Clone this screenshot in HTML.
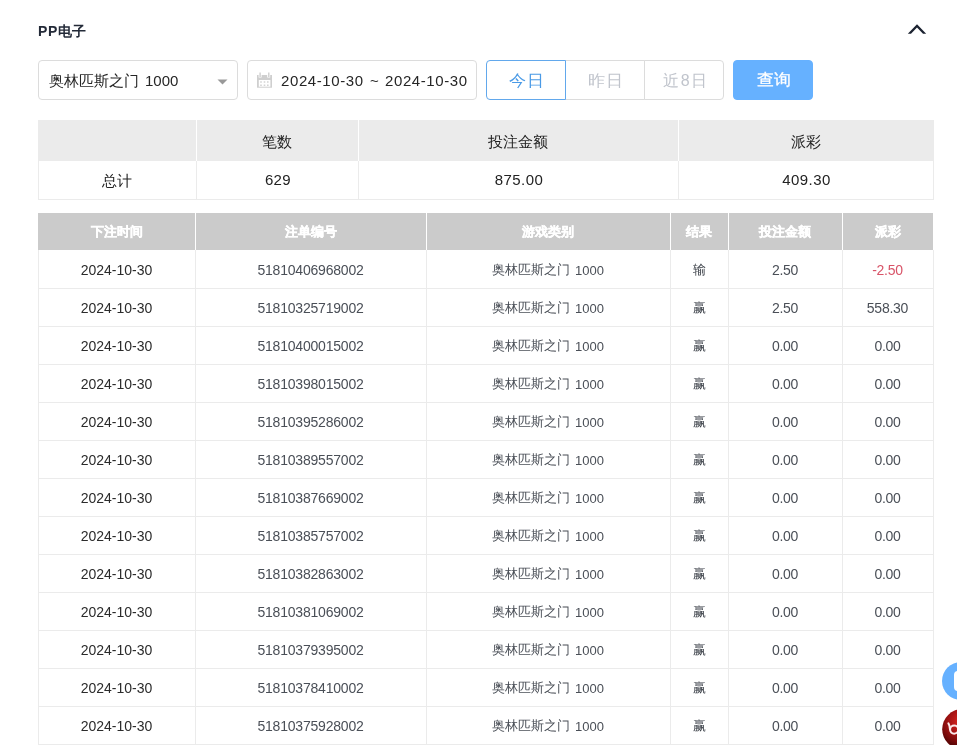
<!DOCTYPE html><html><head><meta charset="utf-8"><style>
*{margin:0;padding:0;box-sizing:border-box}
html,body{width:957px;height:745px;overflow:hidden;background:#fff}
body{position:relative;font-family:"Liberation Sans",sans-serif;font-size:14px;color:#333}
.a{position:absolute}
.t{position:absolute;will-change:transform;text-align:center;white-space:nowrap;line-height:20px;height:20px}
.tl{position:absolute;will-change:transform;white-space:nowrap;line-height:20px;height:20px}
.box{position:absolute;top:60px;height:40px;border:1px solid #dcdcdc;border-radius:4px;background:#fff}
.btn{position:absolute;top:60px;height:40px;border:1px solid #dcdcdc;background:#fff}
</style></head><body><svg class="a g" style="left:0;top:0" width="957" height="50" viewBox="0 0 957 50"><path d="M907.8 33.8 L917 24.2 L926.2 33.8 L923 33.8 L917 27.6 L911 33.8 Z" fill="#1c2331"/></svg>
<div class="box g" style="left:38px;width:200px"></div>
<svg class="a g" style="left:217px;top:79px" width="11" height="6" viewBox="0 0 11 6"><path d="M0.5 0.5 L10.5 0.5 L5.5 5.5Z" fill="#999"/></svg>
<div class="box g" style="left:247px;width:230px"></div>
<svg class="a g" style="left:252px;top:68px" width="24" height="24" viewBox="0 0 24 24"><path fill="#cfcfcf" d="M5 7h15v12.7H5z"/><path fill="#fff" d="M6.8 12h11.6v6.7H6.8z"/><path fill="#fff" d="M6.6 6.2h3v3.4h-3zM15.2 6.2h3v3.4h-3z"/><path fill="#cfcfcf" d="M7.4 4.5h1.4v4.6H7.4zM16.1 4.5h1.4v4.6h-1.4z"/><path fill="#d4d4d4" d="M8.2 13.3h1.6v1.4H8.2zM11.7 13.3h1.6v1.4h-1.6zM15 13.3h1.6v1.4H15zM8.2 16.5h1.6v1.4H8.2zM11.7 16.5h1.6v1.4h-1.6zM15 16.5h1.6v1.4H15z"/></svg>
<div class="btn g" style="left:565px;width:80px"></div>
<div class="btn g" style="left:644px;width:80px;border-radius:0 4px 4px 0"></div>
<div class="btn g" style="left:486px;width:80px;border-color:#62a8ec;border-radius:4px 0 0 4px"></div>
<div class="btn g" style="left:733px;width:80px;border-color:#66b1ff;background:#66b1ff;border-radius:4px"></div>
<div class="a g" style="left:38px;top:120px;width:896px;height:41px;background:#ebebeb"></div>
<div class="a g" style="left:38px;top:161px;width:896px;height:39px;border:1px solid #ebebeb;border-top:none"></div>
<div class="a g" style="left:196px;top:120px;width:1px;height:41px;background:#fff"></div>
<div class="a g" style="left:196px;top:161px;width:1px;height:39px;background:#ebebeb"></div>
<div class="a g" style="left:358px;top:120px;width:1px;height:41px;background:#fff"></div>
<div class="a g" style="left:358px;top:161px;width:1px;height:39px;background:#ebebeb"></div>
<div class="a g" style="left:678px;top:120px;width:1px;height:41px;background:#fff"></div>
<div class="a g" style="left:678px;top:161px;width:1px;height:39px;background:#ebebeb"></div>
<div class="a g" style="left:38px;top:213px;width:895px;height:37px;background:#cbcbcb"></div>
<div class="a g" style="left:195px;top:213px;width:1px;height:37px;background:#fff"></div>
<div class="a g" style="left:426px;top:213px;width:1px;height:37px;background:#fff"></div>
<div class="a g" style="left:670px;top:213px;width:1px;height:37px;background:#fff"></div>
<div class="a g" style="left:728px;top:213px;width:1px;height:37px;background:#fff"></div>
<div class="a g" style="left:842px;top:213px;width:1px;height:37px;background:#fff"></div>
<div class="a g" style="left:38px;top:288px;width:896px;height:1px;background:#ebebeb"></div>
<div class="a g" style="left:38px;top:326px;width:896px;height:1px;background:#ebebeb"></div>
<div class="a g" style="left:38px;top:364px;width:896px;height:1px;background:#ebebeb"></div>
<div class="a g" style="left:38px;top:402px;width:896px;height:1px;background:#ebebeb"></div>
<div class="a g" style="left:38px;top:440px;width:896px;height:1px;background:#ebebeb"></div>
<div class="a g" style="left:38px;top:478px;width:896px;height:1px;background:#ebebeb"></div>
<div class="a g" style="left:38px;top:516px;width:896px;height:1px;background:#ebebeb"></div>
<div class="a g" style="left:38px;top:554px;width:896px;height:1px;background:#ebebeb"></div>
<div class="a g" style="left:38px;top:592px;width:896px;height:1px;background:#ebebeb"></div>
<div class="a g" style="left:38px;top:630px;width:896px;height:1px;background:#ebebeb"></div>
<div class="a g" style="left:38px;top:668px;width:896px;height:1px;background:#ebebeb"></div>
<div class="a g" style="left:38px;top:706px;width:896px;height:1px;background:#ebebeb"></div>
<div class="a g" style="left:38px;top:744px;width:896px;height:1px;background:#ebebeb"></div>
<div class="a g" style="left:38px;top:250px;width:1px;height:495px;background:#ebebeb"></div>
<div class="a g" style="left:195px;top:250px;width:1px;height:495px;background:#ebebeb"></div>
<div class="a g" style="left:426px;top:250px;width:1px;height:495px;background:#ebebeb"></div>
<div class="a g" style="left:670px;top:250px;width:1px;height:495px;background:#ebebeb"></div>
<div class="a g" style="left:728px;top:250px;width:1px;height:495px;background:#ebebeb"></div>
<div class="a g" style="left:842px;top:250px;width:1px;height:495px;background:#ebebeb"></div>
<div class="a g" style="left:933px;top:250px;width:1px;height:495px;background:#ebebeb"></div>
<div class="a g" style="left:942px;top:662px;width:38px;height:38px;border-radius:50%;background:#66b1ff"></div>
<div class="a g" style="left:954px;top:671px;width:10px;height:20px;border-radius:4px;background:#fff"></div>
<svg class="a g" style="left:930px;top:700px" width="27" height="45" viewBox="930 700 27 45"><defs><radialGradient id="rb" cx="962" cy="722" r="24" gradientUnits="userSpaceOnUse"><stop offset="0" stop-color="#e42a22"/><stop offset="0.45" stop-color="#b01616"/><stop offset="0.85" stop-color="#7a0a0a"/><stop offset="1" stop-color="#5e0606"/></radialGradient></defs><circle cx="962.4" cy="729.2" r="20.2" fill="url(#rb)"/><path d="M948.4 723.3 Q950 725.5 950 729.5" fill="none" stroke="#fbe9e9" stroke-width="2" stroke-linecap="round"/><circle cx="954.2" cy="729.6" r="4.1" fill="none" stroke="#fbe9e9" stroke-width="2"/></svg>
<div class="tl" style="left:38px;top:21px;font-size:14px;letter-spacing:0.6px;font-weight:bold;color:#232a38;">PP电子</div>
<div class="tl" style="left:49px;top:71px;font-size:15px;letter-spacing:0px;font-weight:normal;color:#262626;">奥林匹斯之门</div>
<div class="tl" style="left:144.5px;top:71px;font-size:15px;letter-spacing:0px;font-weight:normal;color:#262626;">1000</div>
<div class="tl" style="left:281px;top:71px;font-size:15px;letter-spacing:0.6px;font-weight:normal;color:#262626;">2024-10-30</div>
<div class="tl" style="left:370px;top:71px;font-size:15px;letter-spacing:0px;font-weight:normal;color:#262626;">~</div>
<div class="tl" style="left:385px;top:71px;font-size:15px;letter-spacing:0.6px;font-weight:normal;color:#262626;">2024-10-30</div>
<div class="t" style="left:487.0px;top:71px;width:80px;font-size:16px;letter-spacing:0.9px;font-weight:normal;color:#4a9ae6;transform:scaleX(1.07);">今日</div>
<div class="t" style="left:566.0px;top:71px;width:80px;font-size:16px;letter-spacing:0.9px;font-weight:normal;color:#c0c4cc;transform:scaleX(1.07);">昨日</div>
<div class="t" style="left:645.5px;top:71px;width:80px;font-size:16px;letter-spacing:1.4px;font-weight:normal;color:#c0c4cc;">近8日</div>
<div class="t" style="left:733.6px;top:70px;width:80px;font-size:16px;letter-spacing:0.4px;font-weight:normal;color:#fff;-webkit-text-stroke:0.3px #fff;transform:scaleX(1.06);">查询</div>
<div class="t" style="left:38px;top:171px;width:158px;font-size:15px;letter-spacing:0px;font-weight:normal;color:#222;">总计</div>
<div class="t" style="left:196px;top:132px;width:162px;font-size:15px;letter-spacing:0px;font-weight:normal;color:#222;">笔数</div>
<div class="t" style="left:196.5px;top:170px;width:162px;font-size:15px;letter-spacing:0.4px;font-weight:normal;color:#222;">629</div>
<div class="t" style="left:358px;top:132px;width:320px;font-size:15px;letter-spacing:0px;font-weight:normal;color:#222;">投注金额</div>
<div class="t" style="left:358.5px;top:170px;width:320px;font-size:15px;letter-spacing:0.4px;font-weight:normal;color:#222;">875.00</div>
<div class="t" style="left:678px;top:132px;width:255px;font-size:15px;letter-spacing:0px;font-weight:normal;color:#222;">派彩</div>
<div class="t" style="left:678.5px;top:170px;width:255px;font-size:15px;letter-spacing:0.4px;font-weight:normal;color:#222;">409.30</div>
<div class="t" style="left:38px;top:222px;width:157px;font-size:13px;letter-spacing:0px;font-weight:bold;color:#fff;-webkit-text-stroke:0.35px #fff;">下注时间</div>
<div class="t" style="left:195px;top:222px;width:231px;font-size:13px;letter-spacing:0px;font-weight:bold;color:#fff;-webkit-text-stroke:0.35px #fff;">注单编号</div>
<div class="t" style="left:426px;top:222px;width:244px;font-size:13px;letter-spacing:0px;font-weight:bold;color:#fff;-webkit-text-stroke:0.35px #fff;">游戏类别</div>
<div class="t" style="left:670px;top:222px;width:58px;font-size:13px;letter-spacing:0px;font-weight:bold;color:#fff;-webkit-text-stroke:0.35px #fff;">结果</div>
<div class="t" style="left:728px;top:222px;width:114px;font-size:13px;letter-spacing:0px;font-weight:bold;color:#fff;-webkit-text-stroke:0.35px #fff;">投注金额</div>
<div class="t" style="left:842px;top:222px;width:91px;font-size:13px;letter-spacing:0px;font-weight:bold;color:#fff;-webkit-text-stroke:0.35px #fff;">派彩</div>
<div class="t" style="left:38px;top:260px;width:157px;font-size:14px;letter-spacing:0px;font-weight:normal;color:#2b2b2b;">2024-10-30</div>
<div class="t" style="left:195px;top:260px;width:231px;font-size:14px;letter-spacing:-0.2px;font-weight:normal;color:#4a4f57;">51810406968002</div>
<div class="tl" style="left:492.2px;top:260px;font-size:13px;letter-spacing:0px;font-weight:normal;color:#4a4f57;">奥林匹斯之门</div>
<div class="tl" style="left:575.3px;top:261px;font-size:13px;letter-spacing:0px;font-weight:normal;color:#4a4f57;">1000</div>
<div class="t" style="left:670px;top:260px;width:58px;font-size:13px;letter-spacing:0px;font-weight:normal;color:#3a3f47;">输</div>
<div class="t" style="left:728px;top:260px;width:114px;font-size:14px;letter-spacing:-0.3px;font-weight:normal;color:#4a4f57;">2.50</div>
<div class="t" style="left:842px;top:260px;width:91px;font-size:14px;letter-spacing:-0.25px;font-weight:normal;color:#d85468;">-2.50</div>
<div class="t" style="left:38px;top:298px;width:157px;font-size:14px;letter-spacing:0px;font-weight:normal;color:#2b2b2b;">2024-10-30</div>
<div class="t" style="left:195px;top:298px;width:231px;font-size:14px;letter-spacing:-0.2px;font-weight:normal;color:#4a4f57;">51810325719002</div>
<div class="tl" style="left:492.2px;top:298px;font-size:13px;letter-spacing:0px;font-weight:normal;color:#4a4f57;">奥林匹斯之门</div>
<div class="tl" style="left:575.3px;top:299px;font-size:13px;letter-spacing:0px;font-weight:normal;color:#4a4f57;">1000</div>
<div class="t" style="left:670px;top:298px;width:58px;font-size:13px;letter-spacing:0px;font-weight:normal;color:#3a3f47;">赢</div>
<div class="t" style="left:728px;top:298px;width:114px;font-size:14px;letter-spacing:-0.3px;font-weight:normal;color:#4a4f57;">2.50</div>
<div class="t" style="left:842px;top:298px;width:91px;font-size:14px;letter-spacing:-0.25px;font-weight:normal;color:#4a4f57;">558.30</div>
<div class="t" style="left:38px;top:336px;width:157px;font-size:14px;letter-spacing:0px;font-weight:normal;color:#2b2b2b;">2024-10-30</div>
<div class="t" style="left:195px;top:336px;width:231px;font-size:14px;letter-spacing:-0.2px;font-weight:normal;color:#4a4f57;">51810400015002</div>
<div class="tl" style="left:492.2px;top:336px;font-size:13px;letter-spacing:0px;font-weight:normal;color:#4a4f57;">奥林匹斯之门</div>
<div class="tl" style="left:575.3px;top:337px;font-size:13px;letter-spacing:0px;font-weight:normal;color:#4a4f57;">1000</div>
<div class="t" style="left:670px;top:336px;width:58px;font-size:13px;letter-spacing:0px;font-weight:normal;color:#3a3f47;">赢</div>
<div class="t" style="left:728px;top:336px;width:114px;font-size:14px;letter-spacing:-0.3px;font-weight:normal;color:#4a4f57;">0.00</div>
<div class="t" style="left:842px;top:336px;width:91px;font-size:14px;letter-spacing:-0.25px;font-weight:normal;color:#4a4f57;">0.00</div>
<div class="t" style="left:38px;top:374px;width:157px;font-size:14px;letter-spacing:0px;font-weight:normal;color:#2b2b2b;">2024-10-30</div>
<div class="t" style="left:195px;top:374px;width:231px;font-size:14px;letter-spacing:-0.2px;font-weight:normal;color:#4a4f57;">51810398015002</div>
<div class="tl" style="left:492.2px;top:374px;font-size:13px;letter-spacing:0px;font-weight:normal;color:#4a4f57;">奥林匹斯之门</div>
<div class="tl" style="left:575.3px;top:375px;font-size:13px;letter-spacing:0px;font-weight:normal;color:#4a4f57;">1000</div>
<div class="t" style="left:670px;top:374px;width:58px;font-size:13px;letter-spacing:0px;font-weight:normal;color:#3a3f47;">赢</div>
<div class="t" style="left:728px;top:374px;width:114px;font-size:14px;letter-spacing:-0.3px;font-weight:normal;color:#4a4f57;">0.00</div>
<div class="t" style="left:842px;top:374px;width:91px;font-size:14px;letter-spacing:-0.25px;font-weight:normal;color:#4a4f57;">0.00</div>
<div class="t" style="left:38px;top:412px;width:157px;font-size:14px;letter-spacing:0px;font-weight:normal;color:#2b2b2b;">2024-10-30</div>
<div class="t" style="left:195px;top:412px;width:231px;font-size:14px;letter-spacing:-0.2px;font-weight:normal;color:#4a4f57;">51810395286002</div>
<div class="tl" style="left:492.2px;top:412px;font-size:13px;letter-spacing:0px;font-weight:normal;color:#4a4f57;">奥林匹斯之门</div>
<div class="tl" style="left:575.3px;top:413px;font-size:13px;letter-spacing:0px;font-weight:normal;color:#4a4f57;">1000</div>
<div class="t" style="left:670px;top:412px;width:58px;font-size:13px;letter-spacing:0px;font-weight:normal;color:#3a3f47;">赢</div>
<div class="t" style="left:728px;top:412px;width:114px;font-size:14px;letter-spacing:-0.3px;font-weight:normal;color:#4a4f57;">0.00</div>
<div class="t" style="left:842px;top:412px;width:91px;font-size:14px;letter-spacing:-0.25px;font-weight:normal;color:#4a4f57;">0.00</div>
<div class="t" style="left:38px;top:450px;width:157px;font-size:14px;letter-spacing:0px;font-weight:normal;color:#2b2b2b;">2024-10-30</div>
<div class="t" style="left:195px;top:450px;width:231px;font-size:14px;letter-spacing:-0.2px;font-weight:normal;color:#4a4f57;">51810389557002</div>
<div class="tl" style="left:492.2px;top:450px;font-size:13px;letter-spacing:0px;font-weight:normal;color:#4a4f57;">奥林匹斯之门</div>
<div class="tl" style="left:575.3px;top:451px;font-size:13px;letter-spacing:0px;font-weight:normal;color:#4a4f57;">1000</div>
<div class="t" style="left:670px;top:450px;width:58px;font-size:13px;letter-spacing:0px;font-weight:normal;color:#3a3f47;">赢</div>
<div class="t" style="left:728px;top:450px;width:114px;font-size:14px;letter-spacing:-0.3px;font-weight:normal;color:#4a4f57;">0.00</div>
<div class="t" style="left:842px;top:450px;width:91px;font-size:14px;letter-spacing:-0.25px;font-weight:normal;color:#4a4f57;">0.00</div>
<div class="t" style="left:38px;top:488px;width:157px;font-size:14px;letter-spacing:0px;font-weight:normal;color:#2b2b2b;">2024-10-30</div>
<div class="t" style="left:195px;top:488px;width:231px;font-size:14px;letter-spacing:-0.2px;font-weight:normal;color:#4a4f57;">51810387669002</div>
<div class="tl" style="left:492.2px;top:488px;font-size:13px;letter-spacing:0px;font-weight:normal;color:#4a4f57;">奥林匹斯之门</div>
<div class="tl" style="left:575.3px;top:489px;font-size:13px;letter-spacing:0px;font-weight:normal;color:#4a4f57;">1000</div>
<div class="t" style="left:670px;top:488px;width:58px;font-size:13px;letter-spacing:0px;font-weight:normal;color:#3a3f47;">赢</div>
<div class="t" style="left:728px;top:488px;width:114px;font-size:14px;letter-spacing:-0.3px;font-weight:normal;color:#4a4f57;">0.00</div>
<div class="t" style="left:842px;top:488px;width:91px;font-size:14px;letter-spacing:-0.25px;font-weight:normal;color:#4a4f57;">0.00</div>
<div class="t" style="left:38px;top:526px;width:157px;font-size:14px;letter-spacing:0px;font-weight:normal;color:#2b2b2b;">2024-10-30</div>
<div class="t" style="left:195px;top:526px;width:231px;font-size:14px;letter-spacing:-0.2px;font-weight:normal;color:#4a4f57;">51810385757002</div>
<div class="tl" style="left:492.2px;top:526px;font-size:13px;letter-spacing:0px;font-weight:normal;color:#4a4f57;">奥林匹斯之门</div>
<div class="tl" style="left:575.3px;top:527px;font-size:13px;letter-spacing:0px;font-weight:normal;color:#4a4f57;">1000</div>
<div class="t" style="left:670px;top:526px;width:58px;font-size:13px;letter-spacing:0px;font-weight:normal;color:#3a3f47;">赢</div>
<div class="t" style="left:728px;top:526px;width:114px;font-size:14px;letter-spacing:-0.3px;font-weight:normal;color:#4a4f57;">0.00</div>
<div class="t" style="left:842px;top:526px;width:91px;font-size:14px;letter-spacing:-0.25px;font-weight:normal;color:#4a4f57;">0.00</div>
<div class="t" style="left:38px;top:564px;width:157px;font-size:14px;letter-spacing:0px;font-weight:normal;color:#2b2b2b;">2024-10-30</div>
<div class="t" style="left:195px;top:564px;width:231px;font-size:14px;letter-spacing:-0.2px;font-weight:normal;color:#4a4f57;">51810382863002</div>
<div class="tl" style="left:492.2px;top:564px;font-size:13px;letter-spacing:0px;font-weight:normal;color:#4a4f57;">奥林匹斯之门</div>
<div class="tl" style="left:575.3px;top:565px;font-size:13px;letter-spacing:0px;font-weight:normal;color:#4a4f57;">1000</div>
<div class="t" style="left:670px;top:564px;width:58px;font-size:13px;letter-spacing:0px;font-weight:normal;color:#3a3f47;">赢</div>
<div class="t" style="left:728px;top:564px;width:114px;font-size:14px;letter-spacing:-0.3px;font-weight:normal;color:#4a4f57;">0.00</div>
<div class="t" style="left:842px;top:564px;width:91px;font-size:14px;letter-spacing:-0.25px;font-weight:normal;color:#4a4f57;">0.00</div>
<div class="t" style="left:38px;top:602px;width:157px;font-size:14px;letter-spacing:0px;font-weight:normal;color:#2b2b2b;">2024-10-30</div>
<div class="t" style="left:195px;top:602px;width:231px;font-size:14px;letter-spacing:-0.2px;font-weight:normal;color:#4a4f57;">51810381069002</div>
<div class="tl" style="left:492.2px;top:602px;font-size:13px;letter-spacing:0px;font-weight:normal;color:#4a4f57;">奥林匹斯之门</div>
<div class="tl" style="left:575.3px;top:603px;font-size:13px;letter-spacing:0px;font-weight:normal;color:#4a4f57;">1000</div>
<div class="t" style="left:670px;top:602px;width:58px;font-size:13px;letter-spacing:0px;font-weight:normal;color:#3a3f47;">赢</div>
<div class="t" style="left:728px;top:602px;width:114px;font-size:14px;letter-spacing:-0.3px;font-weight:normal;color:#4a4f57;">0.00</div>
<div class="t" style="left:842px;top:602px;width:91px;font-size:14px;letter-spacing:-0.25px;font-weight:normal;color:#4a4f57;">0.00</div>
<div class="t" style="left:38px;top:640px;width:157px;font-size:14px;letter-spacing:0px;font-weight:normal;color:#2b2b2b;">2024-10-30</div>
<div class="t" style="left:195px;top:640px;width:231px;font-size:14px;letter-spacing:-0.2px;font-weight:normal;color:#4a4f57;">51810379395002</div>
<div class="tl" style="left:492.2px;top:640px;font-size:13px;letter-spacing:0px;font-weight:normal;color:#4a4f57;">奥林匹斯之门</div>
<div class="tl" style="left:575.3px;top:641px;font-size:13px;letter-spacing:0px;font-weight:normal;color:#4a4f57;">1000</div>
<div class="t" style="left:670px;top:640px;width:58px;font-size:13px;letter-spacing:0px;font-weight:normal;color:#3a3f47;">赢</div>
<div class="t" style="left:728px;top:640px;width:114px;font-size:14px;letter-spacing:-0.3px;font-weight:normal;color:#4a4f57;">0.00</div>
<div class="t" style="left:842px;top:640px;width:91px;font-size:14px;letter-spacing:-0.25px;font-weight:normal;color:#4a4f57;">0.00</div>
<div class="t" style="left:38px;top:678px;width:157px;font-size:14px;letter-spacing:0px;font-weight:normal;color:#2b2b2b;">2024-10-30</div>
<div class="t" style="left:195px;top:678px;width:231px;font-size:14px;letter-spacing:-0.2px;font-weight:normal;color:#4a4f57;">51810378410002</div>
<div class="tl" style="left:492.2px;top:678px;font-size:13px;letter-spacing:0px;font-weight:normal;color:#4a4f57;">奥林匹斯之门</div>
<div class="tl" style="left:575.3px;top:679px;font-size:13px;letter-spacing:0px;font-weight:normal;color:#4a4f57;">1000</div>
<div class="t" style="left:670px;top:678px;width:58px;font-size:13px;letter-spacing:0px;font-weight:normal;color:#3a3f47;">赢</div>
<div class="t" style="left:728px;top:678px;width:114px;font-size:14px;letter-spacing:-0.3px;font-weight:normal;color:#4a4f57;">0.00</div>
<div class="t" style="left:842px;top:678px;width:91px;font-size:14px;letter-spacing:-0.25px;font-weight:normal;color:#4a4f57;">0.00</div>
<div class="t" style="left:38px;top:716px;width:157px;font-size:14px;letter-spacing:0px;font-weight:normal;color:#2b2b2b;">2024-10-30</div>
<div class="t" style="left:195px;top:716px;width:231px;font-size:14px;letter-spacing:-0.2px;font-weight:normal;color:#4a4f57;">51810375928002</div>
<div class="tl" style="left:492.2px;top:716px;font-size:13px;letter-spacing:0px;font-weight:normal;color:#4a4f57;">奥林匹斯之门</div>
<div class="tl" style="left:575.3px;top:717px;font-size:13px;letter-spacing:0px;font-weight:normal;color:#4a4f57;">1000</div>
<div class="t" style="left:670px;top:716px;width:58px;font-size:13px;letter-spacing:0px;font-weight:normal;color:#3a3f47;">赢</div>
<div class="t" style="left:728px;top:716px;width:114px;font-size:14px;letter-spacing:-0.3px;font-weight:normal;color:#4a4f57;">0.00</div>
<div class="t" style="left:842px;top:716px;width:91px;font-size:14px;letter-spacing:-0.25px;font-weight:normal;color:#4a4f57;">0.00</div></body></html>
